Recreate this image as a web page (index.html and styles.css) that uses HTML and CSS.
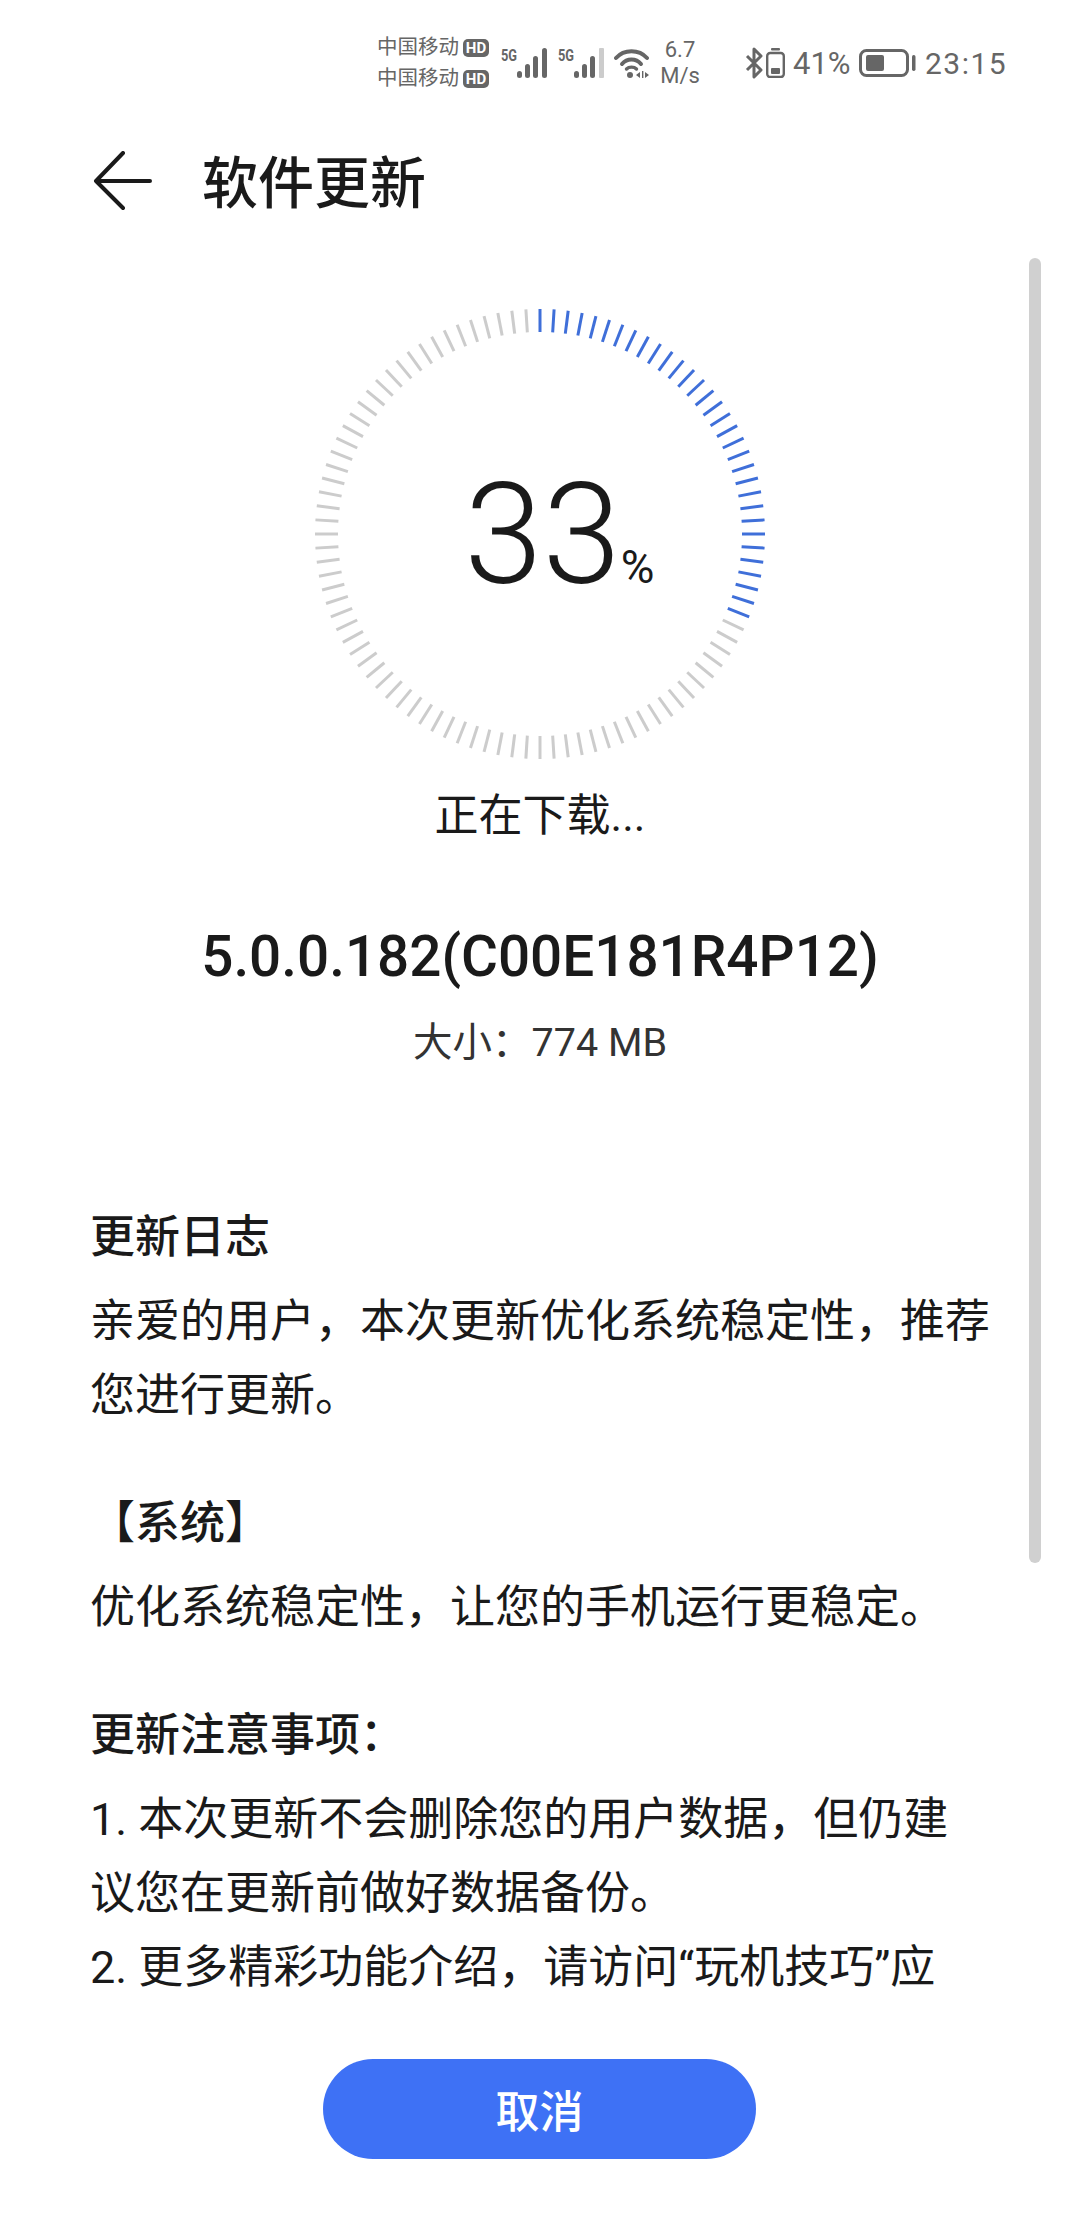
FILE: index.html
```html
<!DOCTYPE html>
<html lang="zh-CN">
<head>
    <meta charset="UTF-8">
    <meta name="viewport" content="width=device-width, initial-scale=1.0">
    <title>软件更新</title>
    <link rel="stylesheet" href="styles.css">
</head>
<body>
    <div class="status-bar">
        <div class="carriers">
            <div class="carrier">中国移动<span class="hd">HD</span></div>
            <div class="carrier">中国移动<span class="hd">HD</span></div>
        </div>
        <div class="signal">
            <span class="net">5G</span>
            <svg class="bars" width="30" height="30" viewBox="0 0 30 30">
                <rect x="0" y="23" width="5" height="7" rx="2.5"/>
                <rect x="8" y="16" width="5" height="14" rx="2.5"/>
                <rect x="16" y="8" width="5" height="22" rx="2.5"/>
                <rect x="25" y="0" width="5" height="30" rx="2.5"/>
            </svg>
        </div>
        <div class="signal signal-second">
            <span class="net">5G</span>
            <svg class="bars" width="30" height="30" viewBox="0 0 30 30">
                <rect x="0" y="23" width="5" height="7" rx="2.5"/>
                <rect x="8" y="16" width="5" height="14" rx="2.5"/>
                <rect x="16" y="8" width="5" height="22" rx="2.5"/>
                <rect class="bar-off" x="25" y="0" width="5" height="30" rx="1"/>
            </svg>
        </div>
        <svg class="wifi" width="36" height="30" viewBox="0 0 36 30">
            <path d="M2 10C10 1 25 1 33 10" fill="none" stroke="#666" stroke-width="4" stroke-linecap="round"/>
            <path d="M8 16C13 10 22 10 27 16" fill="none" stroke="#666" stroke-width="4" stroke-linecap="round"/>
            <path d="M12.500 21C15 18.500 20 18.500 22.500 21" fill="none" stroke="#666" stroke-width="3.400" stroke-linecap="round"/>
            <circle cx="16" cy="27" r="3"/>
            <path d="M26 24V30L22 27ZM31 24V30L35 27Z"/>
            <rect x="28" y="23" width="1.400" height="7"/>
        </svg>
        <div class="speed">6.7<br>M/s</div>
        <svg class="bluetooth" width="18" height="32" viewBox="0 0 18 32">
            <path d="M2 9L16 23L9 30V2L16 9L2 23" fill="none" stroke="#666" stroke-width="3" stroke-linejoin="round"/>
        </svg>
        <svg class="phone-batt" width="19" height="30" viewBox="0 0 19 30">
            <rect x="5" y="0" width="9" height="2.500" rx="1"/>
            <rect x="1.200" y="5" width="16.600" height="24" rx="3" fill="none" stroke="#666" stroke-width="2.400"/>
            <rect x="5" y="20" width="9" height="6" rx="1"/>
        </svg>
        <span class="percent">41%</span>
        <svg class="battery" width="57" height="28" viewBox="0 0 57 28">
            <rect x="1.500" y="1.500" width="47" height="25" rx="6" fill="none" stroke="#666" stroke-width="3"/>
            <rect x="7" y="6" width="18" height="16" rx="2"/>
            <rect x="53" y="6" width="3.500" height="16" rx="1.700"/>
        </svg>
        <span class="clock">23:15</span>
    </div>

    <header class="top-bar">
        <svg class="back" width="60" height="60" viewBox="0 0 60 60">
            <path d="M30 2L3 30L30 57M3 30H57" fill="none" stroke="#1a1a1a" stroke-width="4" stroke-linecap="round" stroke-linejoin="round"/>
        </svg>
        <h1>软件更新</h1>
    </header>

    <main class="content">
        <div class="scrollbar"></div>

        <div class="dial">
            <svg id="ticks" width="460" height="460" viewBox="0 0 460 460"></svg>
            <div class="dial-value">33<span class="dial-unit">%</span></div>
        </div>
        <p class="state">正在下载...</p>
        <p class="version">5.0.0.182(C00E181R4P12)</p>
        <p class="size">大小：774 MB</p>

        <section class="notes">
            <h2>更新日志</h2>
            <p>亲爱的用户，本次更新优化系统稳定性，推荐您进行更新。</p>
            <h2>【系统】</h2>
            <p>优化系统稳定性，让您的手机运行更稳定。</p>
            <h2>更新注意事项：</h2>
            <p>1. 本次更新不会删除您的用户数据，但仍建议您在更新前做好数据备份。<br>2. 更多精彩功能介绍，请访问“玩机技巧”应</p>
        </section>
    </main>

    <footer class="actions">
        <button class="cancel-btn">取消</button>
    </footer>

    <script src="dial.js"></script>
</body>
</html>
```

FILE: styles.css
```css
* {
    box-sizing: border-box;
}

html, body {
    margin: 0;
    height: 100%;
}

body {
    display: flex;
    flex-direction: column;
    width: 1080px;
    height: 2228px;
    overflow: hidden;
    font-family: Roboto, "Noto Sans CJK SC", sans-serif;
    background: #fff;
    color: #1a1a1a;
}

/* status bar */
.status-bar {
    display: flex;
    align-items: center;
    height: 98px;
    padding: 28px 0 0 377px;
    color: #666;
    fill: #666;
}

.carriers {
    width: 113px;
}

.carrier {
    display: flex;
    align-items: center;
    height: 31px;
    font-size: 20.500px;
    line-height: 31px;
}

.hd {
    width: 26px;
    height: 18px;
    margin-left: 4px;
    border-radius: 5px;
    background: #666;
    color: #fff;
    font-size: 15px;
    font-weight: 700;
    line-height: 18px;
    text-align: center;
}

.signal {
    position: relative;
    display: flex;
    width: 46px;
    height: 30px;
    margin-left: 11px;
    justify-content: flex-end;
}

.net {
    position: absolute;
    top: 1px;
    left: 0;
    font-size: 16px;
    font-weight: 700;
    line-height: 13px;
    transform: scaleX(0.8);
    transform-origin: left;
}

.bar-off {
    fill: #ccc;
}

.wifi {
    margin-left: 10px;
}

.speed {
    width: 42px;
    margin-left: 9px;
    font-size: 22px;
    line-height: 26px;
    text-align: center;
}

.bluetooth {
    margin-left: 44px;
}

.phone-batt {
    margin-left: 3px;
}

.percent {
    width: 60px;
    margin-left: 8px;
    font-size: 31px;
}

.battery {
    margin-left: 6px;
}

.clock {
    margin-left: 9px;
    font-size: 30px;
    letter-spacing: 1.500px;
}

/* title bar */
.top-bar {
    display: flex;
    align-items: center;
    height: 160px;
    padding-left: 93px;
}

.back {
    margin-top: 6px;
}

.top-bar h1 {
    margin: 0 0 0 49px;
    font-size: 56px;
    font-weight: 500;
}

/* scrolling part */
.content {
    position: relative;
    flex: 1;
    overflow: hidden;
    padding-top: 46px;
}

.scrollbar {
    position: absolute;
    top: 0;
    left: 1029px;
    width: 12px;
    height: 1305px;
    border-radius: 6px;
    background: #d0d0d0;
}

.dial {
    display: grid;
    place-items: center;
    width: 460px;
    height: 460px;
    margin: 0 auto;
}

.dial > * {
    grid-area: 1 / 1;
}

.tick {
    stroke: #ccc;
    stroke-width: 3;
}

.tick.done {
    stroke: #3f6fd9;
}

.dial-value {
    display: flex;
    align-items: baseline;
    padding-left: 5px;
    font-size: 141px;
    font-weight: 300;
    line-height: 1;
}

.dial-unit {
    width: 0;
    font-size: 46px;
    font-weight: 400;
}

.state,
.version,
.size {
    margin: 0;
    text-align: center;
}

.state {
    margin-top: 22px;
    font-size: 44px;
    line-height: 60px;
}

.version {
    margin-top: 71px;
    font-size: 56.600px;
    font-weight: 500;
    line-height: 80px;
}

.size {
    margin-top: 16px;
    color: #333;
    font-size: 39.500px;
    line-height: 60px;
}

.notes {
    width: 901px;
    margin: 128px 0 0 90px;
    font-size: 45px;
    line-height: 74px;
}

.notes h2 {
    margin: 0 0 10px;
    font-size: 45px;
    font-weight: 500;
}

.notes p {
    margin: 0 0 54px;
}

/* bottom button */
.actions {
    display: flex;
    justify-content: center;
    height: 228px;
    padding: 59px 1px 0 0;
}

.cancel-btn {
    width: 433px;
    height: 100px;
    border: none;
    border-radius: 50px;
    background: #3e71f5;
    color: #fff;
    font-family: inherit;
    font-size: 44px;
    font-weight: 500;
}
```

FILE: dial.js
```js
const ticks = document.getElementById('ticks');
const TOTAL = 100;
const DONE = 32;

for (let i = 0; i < TOTAL; i++) {
    const line = document.createElementNS('http://www.w3.org/2000/svg', 'line');
    line.setAttribute('x1', 230);
    line.setAttribute('y1', 5);
    line.setAttribute('x2', 230);
    line.setAttribute('y2', 28);
    line.setAttribute('transform', `rotate(${i * 3.6} 230 230)`);
    line.setAttribute('class', i < DONE ? 'tick done' : 'tick');
    ticks.appendChild(line);
}
```
